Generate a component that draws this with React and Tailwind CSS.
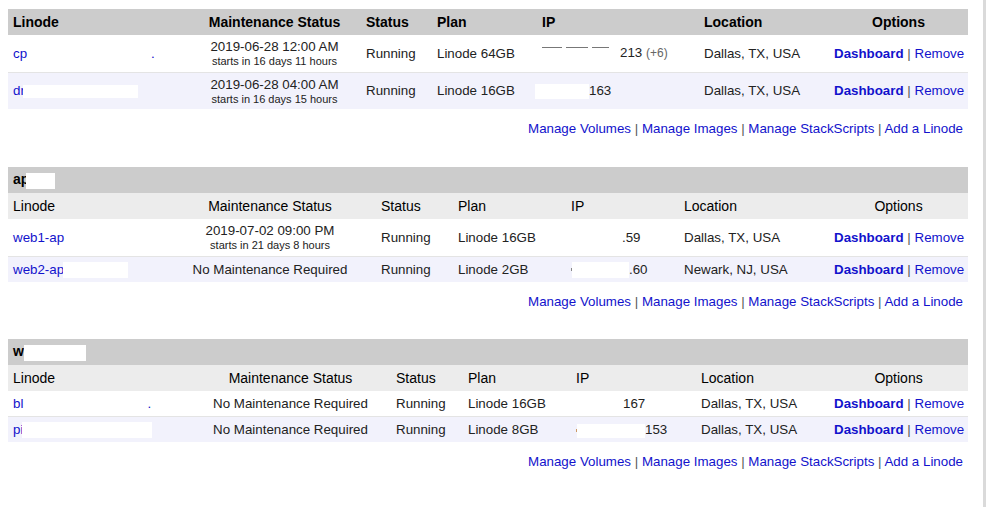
const LINK = 'text-[#1212cc]'

function Redact({ className }) {
  return <span className={`inline-block bg-white align-middle ${className}`} />
}

function Maint({ date, eta }) {
  return (
    <>
      <div className="leading-4">{date}</div>
      <div className="text-[11px] leading-[12.5px]">{eta}</div>
    </>
  )
}

function Options() {
  return (
    <span className="whitespace-nowrap">
      <a className={`font-bold ${LINK}`}>Dashboard</a>
      <span className="text-[#555]"> | </span>
      <a className={LINK}>Remove</a>
    </span>
  )
}

const ALIGN = ['text-left', 'text-center', 'text-left', 'text-left', 'text-left', 'text-left', 'text-center']

function Row({ cells, alt, last }) {
  return (
    <tr className={`${alt ? 'bg-[#f2f2fc]' : 'bg-white'} ${last ? '' : 'border-b border-[#e4e4e4]'}`}>
      {cells.map((c, i) => (
        <td key={i} className={`px-[5px] py-1 whitespace-nowrap text-[13.33px] leading-[17px] ${ALIGN[i]}`}>
          {c}
        </td>
      ))}
      <td className="px-[5px] py-1 text-center text-[13.33px] leading-[17px]">
        <Options />
      </td>
    </tr>
  )
}

const HEADS = ['Linode', 'Maintenance Status', 'Status', 'Plan', 'IP', 'Location', 'Options']

function Group({ cols, title, rows, mb }) {
  return (
    <div className={mb}>
      <table className="w-[960px] table-fixed border-collapse">
        <colgroup>
          {cols.map((c, i) => (
            <col key={i} className={c} />
          ))}
        </colgroup>
        <thead>
          {title && (
            <tr className="bg-[#cccccc]">
              <th colSpan={7} className="h-[26px] px-[5px] py-0 text-left font-bold text-black">
                {title}
              </th>
            </tr>
          )}
          <tr className={title ? 'bg-[#ececec]' : 'bg-[#cccccc]'}>
            {HEADS.map((h, i) => (
              <th
                key={h}
                className={`h-[26px] px-[5px] py-0 text-black ${title ? 'font-normal' : 'font-bold'} ${ALIGN[i]}`}
              >
                {h}
              </th>
            ))}
          </tr>
        </thead>
        <tbody>
          {rows.map((r, i) => (
            <Row key={i} cells={r} alt={i % 2 === 1} last={i === rows.length - 1} />
          ))}
        </tbody>
      </table>
      <div className="mt-3 w-[960px] pr-[5px] text-right text-[13.33px]">
        <a className={LINK}>Manage Volumes</a>
        <span className="text-[#555]"> | </span>
        <a className={LINK}>Manage Images</a>
        <span className="text-[#555]"> | </span>
        <a className={LINK}>Manage StackScripts</a>
        <span className="text-[#555]"> | </span>
        <a className={LINK}>Add a Linode</a>
      </div>
    </div>
  )
}

const NO_MAINT = 'No Maintenance Required'

export default function App() {
  return (
    <div className="flex min-h-[507px] bg-white font-['Liberation_Sans',Arial,sans-serif] text-[14px] leading-4 text-[#222]">
      <div className="w-[983px] shrink-0 pl-2 pt-[9px]">
        <Group
          mb="mb-[30px]"
          cols={['w-[180px]', 'w-[173px]', 'w-[71px]', 'w-[105px]', 'w-[162px]', 'w-[130px]', 'w-[139px]']}
          rows={[
            [
              <a className={LINK}>
                cp<span className="inline-block w-[124px]" />.
              </a>,
              <Maint date="2019-06-28 12:00 AM" eta="starts in 16 days 11 hours" />,
              'Running',
              'Linode 64GB',
              <span>
                <span className="inline-flex h-4 w-[78px] items-start gap-[4px] pt-[1px] align-middle">
                  <span className="h-px w-[20px] bg-[#777]" />
                  <span className="h-px w-[22px] bg-[#777]" />
                  <span className="h-px w-[17px] bg-[#777]" />
                </span>
                213 <span className="text-[12px] text-[#666]">(+6)</span>
              </span>,
              'Dallas, TX, USA',
            ],
            [
              <a className={LINK}>
                dr
                <Redact className="-ml-[2px] h-[13px] w-[115px]" />
              </a>,
              <Maint date="2019-06-28 04:00 AM" eta="starts in 16 days 15 hours" />,
              'Running',
              'Linode 16GB',
              <span>
                <Redact className="-ml-[7px] h-[15px] w-[54px]" />
                163
              </span>,
              'Dallas, TX, USA',
            ],
          ]}
        />
        <Group
          mb="mb-[29px]"
          title={
            <span>
              ap<Redact className="-ml-[3px] h-4 w-[29px]" />
            </span>
          }
          cols={['w-[156px]', 'w-[212px]', 'w-[77px]', 'w-[113px]', 'w-[113px]', 'w-[150px]', 'w-[139px]']}
          rows={[
            [
              <a className={LINK}>web1-ap</a>,
              <Maint date="2019-07-02 09:00 PM" eta="starts in 21 days 8 hours" />,
              'Running',
              'Linode 16GB',
              <span>
                <span className="inline-block w-[51px]" />
                .59
              </span>,
              'Dallas, TX, USA',
            ],
            [
              <a className={LINK}>
                web2-ap<Redact className="-ml-[1px] h-[16px] w-[65px]" />
              </a>,
              NO_MAINT,
              'Running',
              'Linode 2GB',
              <span>
                <span className="inline-block h-[3px] w-px bg-[#888] align-middle" />
                <Redact className="h-[16px] w-[57px]" />
                .60
              </span>,
              'Newark, NJ, USA',
            ],
          ]}
        />
        <Group
          mb="mb-0"
          title={
            <span>
              w<Redact className="h-4 w-[62px]" />
            </span>
          }
          cols={['w-[182px]', 'w-[201px]', 'w-[72px]', 'w-[108px]', 'w-[125px]', 'w-[133px]', 'w-[139px]']}
          rows={[
            [
              <a className={LINK}>
                bl<span className="inline-block w-[124px]" />.
              </a>,
              NO_MAINT,
              'Running',
              'Linode 16GB',
              <span>
                <span className="inline-block w-[47px]" />
                167
              </span>,
              'Dallas, TX, USA',
            ],
            [
              <a className={LINK}>
                pi<Redact className="-ml-[1px] h-[16px] w-[130px]" />
              </a>,
              NO_MAINT,
              'Running',
              'Linode 8GB',
              <span>
                <span className="inline-block h-[3px] w-px bg-[#c96] align-middle" />
                <Redact className="h-[14px] w-[68px]" />
                153
              </span>,
              'Dallas, TX, USA',
            ],
          ]}
        />
      </div>
      <div className="w-[3px] shrink-0 bg-[#dadada]" />
      <div className="flex-1 bg-white" />
    </div>
  )
}
